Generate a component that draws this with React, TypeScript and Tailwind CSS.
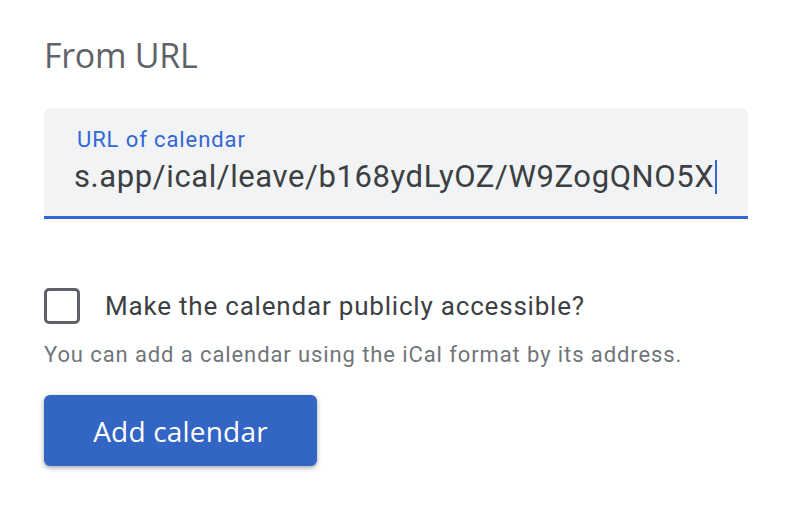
export default function App() {
  return (
    <div className="min-h-screen w-[808px] bg-white pl-[44px] pt-[34px] font-['Roboto',sans-serif]">
      <h1 className="text-[34px] leading-[42px] text-[#5f6368] font-['Open_Sans',sans-serif] tracking-[-0.3px]">
        From URL
      </h1>

      <div className="mt-[32px] w-[704px] h-[111px] rounded-t-[8px] bg-[#f1f3f4] border-b-[3px] border-[#3367d6] pl-[33px] pr-[20px] pt-[20px] overflow-hidden">
        <div className="text-[22px] leading-[24px] tracking-[0.9px] text-[#3367d6]">URL of calendar</div>
        <div className="mt-[6px] flex items-center whitespace-nowrap">
          <span className="text-[31px] leading-[38px] tracking-[0.6px] text-[#3c4043] -ml-[3px]">
            s.app/ical/leave/b168ydLyOZ/W9ZogQNO5X
          </span>
          <span className="ml-[1px] w-[2px] h-[34px] bg-[#3367d6]" />
        </div>
      </div>

      <label className="mt-[69px] flex items-center">
        <span className="w-[36px] h-[36px] rounded-[5px] border-[3px] border-[#5f6368] bg-white" />
        <span className="ml-[25px] text-[26px] leading-[32px] tracking-[0.8px] text-[#3c4043]">
          Make the calendar publicly accessible?
        </span>
      </label>

      <p className="mt-[18px] text-[22px] leading-[26px] tracking-[0.9px] text-[#70757a]">
        You can add a calendar using the iCal format by its address.
      </p>

      <button className="mt-[27px] w-[273px] h-[71px] rounded-[6px] bg-[#3365c4] text-white text-[28px] tracking-[0.2px] font-medium font-['Open_Sans',sans-serif] shadow-[0_2px_4px_rgba(60,64,67,0.35),0_1px_6px_rgba(60,64,67,0.15)]">
        Add calendar
      </button>
    </div>
  );
}
